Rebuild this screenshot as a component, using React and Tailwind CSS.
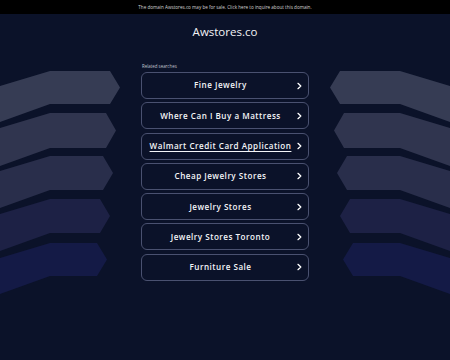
import React from "react";

const items = [
  "Fine Jewelry",
  "Where Can I Buy a Mattress",
  "Walmart Credit Card Application",
  "Cheap Jewelry Stores",
  "Jewelry Stores",
  "Jewelry Stores Toronto",
  "Furniture Sale",
];

const shapes = [
  { t: 71, b: 104, c: 110, p: 120, fill: "#363c54" },
  { t: 113, b: 148, c: 106, p: 116, fill: "#30354f" },
  { t: 156, b: 190, c: 103, p: 113, fill: "#292e4b" },
  { t: 199, b: 233, c: 100, p: 110, fill: "#1d2145" },
  { t: 243, b: 276, c: 97, p: 107, fill: "#141a46" },
];

function Decor() {
  return (
    <svg className="absolute inset-0 pointer-events-none" width="450" height="360" viewBox="0 0 450 360">
      {shapes.map((s, i) => {
        const m = (s.t + s.b) / 2;
        const left = `0,${s.t + 15} 50,${s.t} ${s.c},${s.t} ${s.p},${m} ${s.c},${s.b} 50,${s.b} 0,${s.b + 18}`;
        const right = `450,${s.t + 15} 400,${s.t} ${450 - s.c},${s.t} ${450 - s.p},${m} ${450 - s.c},${s.b} 400,${s.b} 450,${s.b + 18}`;
        return (
          <g key={i}>
            <polygon points={left} fill={s.fill} />
            <polygon points={right} fill={s.fill} />
          </g>
        );
      })}
    </svg>
  );
}

function Chevron() {
  return (
    <svg width="5" height="7" viewBox="0 0 5 7" className="absolute right-[6px] top-1/2 -translate-y-1/2">
      <polyline points="1,0.8 3.8,3.5 1,6.2" fill="none" stroke="#ffffff" strokeWidth="1.3" strokeLinecap="round" strokeLinejoin="round" />
    </svg>
  );
}

export default function App() {
  return (
    <div
      className="relative w-[450px] h-[360px] overflow-hidden bg-[#0b1229]"
      style={{ fontFamily: '"Open Sans", "Noto Sans", sans-serif' }}
    >
      <Decor />
      <div className="relative flex flex-col items-center">
        <div className="w-full h-[14px] bg-black flex items-center justify-center text-[4.6px] text-[#d4d4d4]">
          The domain Awstores.co may be for sale. Click here to inquire about this domain.
        </div>
        <div className="mt-[11px] h-[14px] leading-[14px] text-[11.5px] text-[#f2f3f6]">Awstores.co</div>
        <div className="w-[168px] mt-[24px] flex flex-col">
          <div className="h-[6px] leading-[6px] text-[4.4px] text-[#c0c4ce] pl-[1px]">Related searches</div>
          <div className="mt-[3px] flex flex-col gap-[3.3px]">
            {items.map((t, i) => (
              <div
                key={t}
                className="relative h-[27px] rounded-[6px] border border-[#4a5170] flex items-center justify-center pr-[9px]"
              >
                <span
                  className={
                    "text-[8.1px] font-semibold tracking-[0.5px] text-[#f4f5f8] " +
                    (i === 2 ? "underline underline-offset-[1.5px]" : "")
                  }
                >
                  {t}
                </span>
                <Chevron />
              </div>
            ))}
          </div>
        </div>
      </div>
    </div>
  );
}
